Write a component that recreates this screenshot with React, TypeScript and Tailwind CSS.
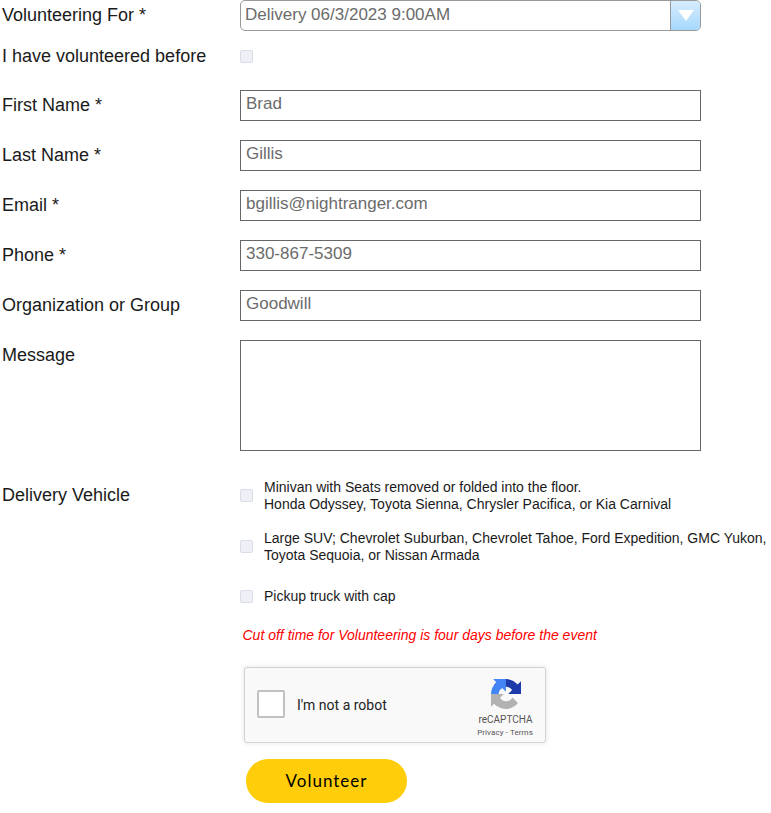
import React from "react";

const fields = [
  { label: "First Name *", value: "Brad" },
  { label: "Last Name *", value: "Gillis" },
  { label: "Email *", value: "bgillis@nightranger.com" },
  { label: "Phone *", value: "330-867-5309" },
  { label: "Organization or Group", value: "Goodwill" },
];

function Check() {
  return (
    <span className="block h-[13px] w-[13px] shrink-0 rounded-[2px] border border-[#d9dee8] bg-[#eff0f5]" />
  );
}

function Label({ children }: { children: React.ReactNode }) {
  return (
    <div className="w-[240px] shrink-0 whitespace-nowrap pl-[2px] text-[18px] leading-[30px]">
      {children}
    </div>
  );
}

function RecaptchaLogo() {
  return (
    <svg viewBox="0 0 64 64" className="ml-px h-[30px] w-[30px]">
      <path
        fill="#1c3aa9"
        d="M64 31.955l-.033-1.37V4.687l-7.16 7.16C50.948 4.674 42.033.093 32.05.093c-10.4 0-19.622 4.96-25.458 12.64l11.736 11.86a15.55 15.55 0 0 1 4.754-5.334c2.05-1.6 4.952-2.906 8.968-2.906.485 0 .86.057 1.135.163 4.976.393 9.288 3.14 11.828 7.124l-8.307 8.307L64 31.953"
      />
      <path
        fill="#4285f4"
        d="M31.862.094l-1.37.033H4.594l7.16 7.16C4.58 13.147 0 22.06 0 32.046c0 10.4 4.96 19.622 12.64 25.458L24.5 45.768a15.55 15.55 0 0 1-5.334-4.754c-1.6-2.05-2.906-4.952-2.906-8.968 0-.485.057-.86.163-1.135.393-4.976 3.14-9.288 7.124-11.828l8.307 8.307L31.86.095"
      />
      <path
        fill="#b2b2b2"
        d="M.001 32.045l.033 1.37v25.898l7.16-7.16c5.86 7.173 14.774 11.754 24.76 11.754 10.4 0 19.622-4.96 25.458-12.64l-11.736-11.86a15.55 15.55 0 0 1-4.754 5.334c-2.05 1.6-4.952 2.906-8.968 2.906-.485 0-.86-.057-1.135-.163-4.976-.393-9.288-3.14-11.828-7.124l8.307-8.307c-10.522.04-22.4.066-27.295-.005"
      />
    </svg>
  );
}

export default function App() {
  return (
    <div className="h-[813px] w-[771px] overflow-hidden bg-white font-['Liberation_Sans',Arial,sans-serif] text-[#1a1a1a]">
      <div className="flex h-[41px]">
        <Label>Volunteering For *</Label>
        <div className="flex h-[31px] w-[461px] overflow-hidden rounded-[5px] border border-[#999]">
          <div className="flex-1 pl-[4px] text-[17px] leading-[27px] text-[#6b6b6b]">
            Delivery 06/3/2023 9:00AM
          </div>
          <div className="flex w-[30px] justify-center border-l border-[#999] bg-linear-to-b from-[#d6ecfd] to-[#a6d8fd] pt-[9px]">
            <svg viewBox="0 0 16 11" className="h-[11px] w-[16px]">
              <path d="M0 0h16L8 11z" fill="#fff" />
            </svg>
          </div>
        </div>
      </div>

      <div className="flex h-[49px]">
        <Label>I have volunteered before</Label>
        <div className="pt-[9px]">
          <Check />
        </div>
      </div>

      {fields.map((f) => (
        <div key={f.label} className="flex h-[50px]">
          <Label>{f.label}</Label>
          <div className="h-[31px] w-[461px] border border-[#666] pl-[5px] text-[17px] leading-[25px] text-[#6b6b6b]">
            {f.value}
          </div>
        </div>
      ))}

      <div className="flex h-[140px]">
        <Label>Message</Label>
        <div className="h-[111px] w-[461px] border border-[#666]" />
      </div>

      <div className="flex">
        <Label>Delivery Vehicle</Label>
        <div className="whitespace-nowrap text-[14px] leading-[17px]">
          <div className="flex h-[50px] items-start gap-[11px]">
            <div className="pt-[9px]">
              <Check />
            </div>
            <div className="-mt-px">
              Minivan with Seats removed or folded into the floor.
              <br />
              Honda Odyssey, Toyota Sienna, Chrysler Pacifica, or Kia Carnival
            </div>
          </div>
          <div className="flex h-[50px] items-start gap-[11px]">
            <div className="pt-[10px]">
              <Check />
            </div>
            <div>
              Large SUV; Chevrolet Suburban, Chevrolet Tahoe, Ford Expedition, GMC Yukon,
              <br />
              Toyota Sequoia, or Nissan Armada
            </div>
          </div>
          <div className="flex h-[47px] items-start gap-[11px]">
            <div className="pt-[10px]">
              <Check />
            </div>
            <div className="pt-[8px]">Pickup truck with cap</div>
          </div>
          <div className="h-[40px] pl-[2.5px] italic text-[#f00]">
            Cut off time for Volunteering is four days before the event
          </div>
        </div>
      </div>

      <div className="ml-[244px] flex h-[76px] w-[302px] rounded-[3px] border border-[#d3d3d3] bg-[#f9f9f9] font-[Roboto,sans-serif] shadow-[0_0_4px_1px_rgba(0,0,0,0.08)]">
        <div className="ml-[12px] mt-[22px] h-[28px] w-[28px] rounded-[2px] border-2 border-[#c1c1c1] bg-white" />
        <div className="ml-[12px] mt-[29px] flex-1 text-[14px] leading-[17px] text-[#222]">
          I'm not a robot
        </div>
        <div className="mr-[10px] flex w-[60px] flex-col items-center whitespace-nowrap pt-[11px] text-[#555]">
          <RecaptchaLogo />
          <div className="ml-px mt-[6px] text-[10px] leading-[10px]">reCAPTCHA</div>
          <div className="mt-[3px] text-[8px] leading-[10px] tracking-[0.08px]">Privacy&nbsp;-&nbsp;Terms</div>
        </div>
      </div>

      <button className="ml-[246px] mt-[16px] flex h-[44px] w-[161px] items-center justify-center rounded-full bg-[#ffcd0a] pb-[1px] font-['Lato'] text-[17px] tracking-[1px] text-black">
        Volunteer
      </button>
    </div>
  );
}
